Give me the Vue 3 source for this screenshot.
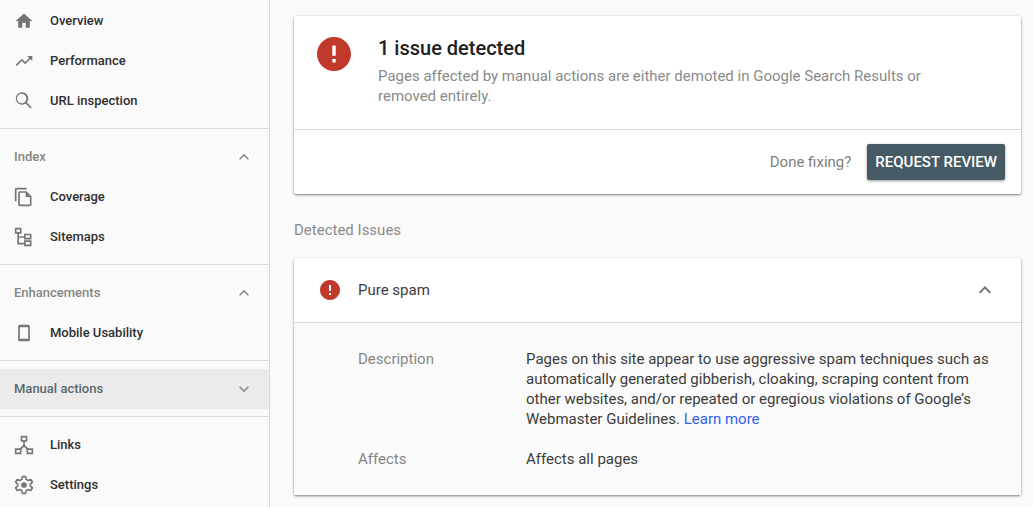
<script setup>
import { ref } from 'vue'

const icons = {
  home: 'M10 20v-6h4v6h5v-8h3L12 3 2 12h3v8z',
  trend: 'M16 6l2.29 2.29-4.88 4.88-4-4L2 16.59 3.41 18l6-6 4 4 6.3-6.29L22 12V6z',
  search: 'M15.500 13.700L21.200 19.600 19.800 21l-5.800-5.900A7.500 7.500 0 1 1 15.500 13.700zM9.200 3.400a5.700 5.700 0 1 0 0 11.400 5.700 5.700 0 0 0 0-11.400z',
  copy: 'M15 1H3C1.900 1 1 1.900 1 3v14h2V3h12V1zM15 5H7C5.900 5 5 5.900 5 7v14c0 1.100.9 2 2 2h12c1.100 0 2-.9 2-2V11l-6-6zM7 21V7h7v5h5v9H7z',
  tree: 'M1 1v7h3v13h8v2h9v-7h-9v3H6v-6h6v2h9V8h-9v3H6V8h3V1H1zm2 2h4v3H3V3zm11 7h5v3h-5v-3zm0 8h5v3h-5v-3z',
  phone: 'M17 2H7C5.9 2 5 2.9 5 4v16c0 1.1.9 2 2 2h10c1.1 0 2-.9 2-2V4c0-1.100-.9-2-2-2zM17 19H7V5h10v14z',
  network: 'M8 1v7h3v4l-4 4H1v7h8v-6l3-3 3 3v6h8v-7h-6l-4-4V8h3V1H8zm2 2h4v3h-4V3zM3 18h4v3H3v-3zm14 0h4v3h-4v-3z',
  up: 'M12 8l-6 6 1.410 1.410L12 10.830l4.590 4.580L18 14z',
  down: 'M16.590 8.590L12 13.170 7.410 8.590 6 10l6 6 6-6z',
  error: 'M12 2C6.480 2 2 6.480 2 12s4.480 10 10 10 10-4.480 10-10S17.520 2 12 2zm1 15h-2v-2h2v2zm0-4h-2V7h2v6z'
}

const sections = [
  {
    items: [
      { label: 'Overview', icon: 'home' },
      { label: 'Performance', icon: 'trend' },
      { label: 'URL inspection', icon: 'search' }
    ]
  },
  {
    title: 'Index',
    open: true,
    items: [
      { label: 'Coverage', icon: 'copy' },
      { label: 'Sitemaps', icon: 'tree' }
    ]
  },
  { title: 'Enhancements', open: true, items: [{ label: 'Mobile Usability', icon: 'phone' }] },
  { title: 'Manual actions', open: false, active: true, items: [] },
  {
    items: [
      { label: 'Links', icon: 'network' },
      { label: 'Settings', icon: 'settings' }
    ]
  }
]

const issueOpen = ref(true)
</script>

<template>
  <div class="page">
    <nav class="sidebar">
      <section v-for="(section, i) in sections" :key="i" class="group">
        <button
          v-if="section.title"
          type="button"
          class="row heading"
          :class="{ active: section.active }"
          :aria-expanded="section.open"
        >
          <span>{{ section.title }}</span>
          <svg class="chevron" viewBox="0 0 24 24" aria-hidden="true">
            <path :d="section.open ? icons.up : icons.down" />
          </svg>
        </button>
        <a v-for="item in section.items" :key="item.label" href="#" class="row item">
          <svg class="icon" viewBox="0 0 24 24" aria-hidden="true">
            <template v-if="item.icon === 'settings'">
              <path
                class="gear"
                d="M9.400 5.200L10.200 2h3.600l.8 3.200 2.500 1.400 3.100-1.200 1.900 3.300-2.500 1.900v2.800l2.500 1.900-1.900 3.300-3.100-1.200-2.500 1.400-.8 3.200h-3.600l-.8-3.200-2.500-1.400-3.100 1.200-1.900-3.300 2.500-1.900v-2.800L1.900 8.700l1.900-3.300 3.100 1.200z"
              />
              <circle cx="12" cy="12" r="3.400" />
            </template>
            <path v-else :d="icons[item.icon]" fill-rule="evenodd" />
          </svg>
          <span>{{ item.label }}</span>
        </a>
      </section>
    </nav>

    <main class="content">
      <section class="card">
        <div class="summary">
          <svg class="alert large" viewBox="2 2 20 20" aria-hidden="true"><path :d="icons.error" /></svg>
          <div>
            <h1>1 issue detected</h1>
            <p>Pages affected by manual actions are either demoted in Google Search Results or removed entirely.</p>
          </div>
        </div>
        <div class="actions">
          <span>Done fixing?</span>
          <button type="button" class="review">REQUEST REVIEW</button>
        </div>
      </section>

      <h2>Detected Issues</h2>

      <section class="card">
        <button type="button" class="issue" :aria-expanded="issueOpen" @click="issueOpen = !issueOpen">
          <svg class="alert" viewBox="2 2 20 20" aria-hidden="true"><path :d="icons.error" /></svg>
          <span class="name">Pure spam</span>
          <svg class="toggle" viewBox="0 0 24 24" aria-hidden="true">
            <path :d="issueOpen ? icons.up : icons.down" />
          </svg>
        </button>
        <dl v-if="issueOpen" class="details">
          <dt>Description</dt>
          <dd>
            Pages on this site appear to use aggressive spam techniques such as automatically generated
            gibberish, cloaking, scraping content from other websites, and/or repeated or egregious
            violations of Google’s Webmaster Guidelines. <a href="#">Learn more</a>
          </dd>
          <dt>Affects</dt>
          <dd>Affects all pages</dd>
        </dl>
      </section>
    </main>
  </div>
</template>

<style>
body {
  background: #fafafa;
}
</style>

<style scoped>
.page {
  display: flex;
  min-height: 100vh;
  color: #3c3c3c;
  font: 15px/20px Roboto, sans-serif;
}
.page *,
.page {
  box-sizing: border-box;
}
button {
  border: 0;
  font: inherit;
  cursor: pointer;
}
a {
  text-decoration: none;
}
svg {
  flex: none;
  fill: currentColor;
}
.sidebar {
  flex: 0 0 270px;
  padding-top: 1px;
  border-right: 1px solid #dadada;
  font-size: 13px;
  font-weight: 500;
}
.group {
  padding-bottom: 7px;
}
.group + .group {
  border-top: 1px solid #dadada;
  padding-top: 8px;
}
.row {
  display: flex;
  align-items: center;
  width: 100%;
  height: 40px;
  padding: 0 14px;
  background: none;
}
.heading {
  justify-content: space-between;
  padding-right: 15px;
  color: #868686;
}
.heading.active {
  background: #ebebeb;
  color: #5a6870;
}
.item {
  gap: 16px;
  color: #303030;
}
.icon {
  width: 20px;
  height: 20px;
  color: #757575;
}
.gear {
  fill: none;
  stroke: currentColor;
  stroke-width: 2;
  stroke-linejoin: round;
}
.chevron {
  width: 20px;
  height: 20px;
  color: #8a8a8a;
}
.content {
  flex: 1;
  min-width: 0;
  padding: 16px 12px 12px 24px;
}
.card {
  border-radius: 2px;
  background: #fff;
  box-shadow: 0 1px 3px rgba(0, 0, 0, 0.3), 0 1px 2px rgba(0, 0, 0, 0.24);
}
.summary {
  display: flex;
  align-items: flex-start;
  gap: 27px;
  padding: 20px 80px 23px 23px;
  border-bottom: 1px solid #dadada;
  color: #8a8a8a;
}
h1,
h2,
p,
dl,
dd {
  margin: 0;
}
h1 {
  margin-bottom: 6px;
  color: #212121;
  font-size: 20px;
  font-weight: 500;
  line-height: 24px;
}
.alert {
  width: 20px;
  height: 20px;
  color: #c0392b;
}
.alert.large {
  width: 34px;
  height: 34px;
  margin-top: 1px;
}
.actions {
  display: flex;
  align-items: center;
  justify-content: flex-end;
  gap: 16px;
  padding: 14px 16px;
  color: #808080;
}
.review {
  height: 36px;
  padding: 0 8px;
  border-radius: 2px;
  background: #455a64;
  box-shadow: 0 1px 3px rgba(0, 0, 0, 0.4);
  color: #fff;
  font-size: 15px;
  font-weight: 500;
}
h2 {
  margin: 26px 0 18px;
  color: #8a8a8a;
  font-size: 15px;
  font-weight: 400;
}
.issue {
  display: flex;
  align-items: center;
  gap: 18px;
  width: 100%;
  height: 65px;
  padding: 0 24px 0 26px;
  border-bottom: 1px solid #dadada;
  background: none;
  color: #3c3c3c;
  text-align: left;
}
.name {
  flex: 1;
}
.toggle {
  width: 24px;
  height: 24px;
  color: #757575;
}
.details {
  display: grid;
  grid-template-columns: 168px 1fr;
  row-gap: 20px;
  padding: 26px 24px 26px 64px;
  background: #fafafa;
}
dt {
  color: #868686;
}
dd a {
  color: #3461e8;
}
</style>
